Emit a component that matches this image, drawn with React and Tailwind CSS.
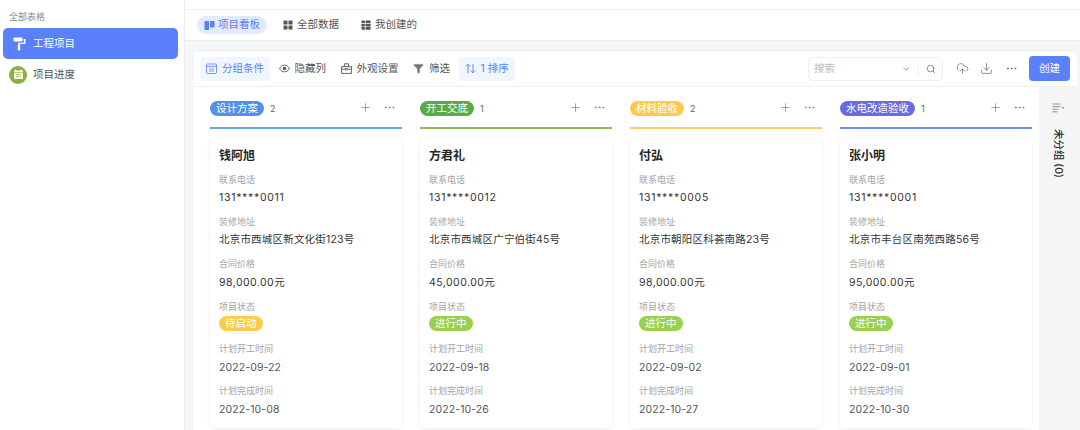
import React from 'react';
import { Plus, MoreHorizontal, Filter, ChevronDown, Search, CloudUpload, Download } from 'lucide-react';

const columns = [
  {
    name: '设计方案', pill: 'bg-[#5590e8]', line: 'bg-[#6ba3ee]', count: 2,
    person: '钱阿旭', phone: '131****0011', address: '北京市西城区新文化街123号', price: '98,000.00元',
    status: '待启动', statusColor: 'bg-[#fbcb4e]', start: '2022-09-22', end: '2022-10-08',
  },
  {
    name: '开工交底', pill: 'bg-[#58ad47]', line: 'bg-[#95b858]', count: 1,
    person: '方君礼', phone: '131****0012', address: '北京市西城区广宁伯街45号', price: '45,000.00元',
    status: '进行中', statusColor: 'bg-[#9ad04b]', start: '2022-09-18', end: '2022-10-26',
  },
  {
    name: '材料验收', pill: 'bg-[#fbcb4e]', line: 'bg-[#f2d06b]', count: 2,
    person: '付弘', phone: '131****0005', address: '北京市朝阳区科荟南路23号', price: '98,000.00元',
    status: '进行中', statusColor: 'bg-[#9ad04b]', start: '2022-09-02', end: '2022-10-27',
  },
  {
    name: '水电改造验收', pill: 'bg-[#6a6be0]', line: 'bg-[#6f8ff0]', count: 1,
    person: '张小明', phone: '131****0001', address: '北京市丰台区南苑西路56号', price: '95,000.00元',
    status: '进行中', statusColor: 'bg-[#9ad04b]', start: '2022-09-01', end: '2022-10-30',
  },
];

const Field = ({ label, children }) => (
  <div className="h-[42.4px]">
    <div className="text-[9px] leading-[14px] text-[#a3a3a3]">{label}</div>
    <div className="mt-[2.5px] text-[10.5px] leading-[18px] text-[#333]">{children}</div>
  </div>
);

const Card = ({ col }) => (
  <div className="h-[291px] rounded-[5px] bg-white px-[9px] pt-[10.5px] shadow-[0_1px_4px_rgba(0,0,0,0.08)]">
    <div className="h-[25px] text-[12px] font-bold leading-[15px] text-[#262626]">{col.person}</div>
    <Field label="联系电话"><span className="tracking-[0.7px]">{col.phone}</span></Field>
    <Field label="装修地址"><span className="tracking-[0.2px]">{col.address}</span></Field>
    <Field label="合同价格"><span className="tracking-[0.45px]">{col.price}</span></Field>
    <Field label="项目状态">
      <span className={`inline-block h-[15px] rounded-full px-[6px] align-top text-[10.5px] leading-[15px] text-white ${col.statusColor}`}>
        {col.status}
      </span>
    </Field>
    <Field label="计划开工时间"><span className="tracking-[0.1px] text-[#555]">{col.start}</span></Field>
    <Field label="计划完成时间"><span className="tracking-[0.1px] text-[#555]">{col.end}</span></Field>
  </div>
);

const Column = ({ col }) => (
  <div className="w-[192px] shrink-0">
    <div className="flex h-[39.5px] items-start pt-[14px]">
      <span className={`h-[15px] rounded-full px-[6px] text-[10.5px] leading-[15px] text-white ${col.pill}`}>{col.name}</span>
      <span className="ml-[6px] text-[9px] leading-[15px] text-[#666]">{col.count}</span>
      <div className="ml-auto flex items-center gap-[11px] pr-[6px] text-[#666]">
        <Plus size={13} strokeWidth={1.1} />
        <MoreHorizontal size={13} strokeWidth={1.1} />
      </div>
    </div>
    <div className={`h-[2px] ${col.line}`} />
    <div className="mt-[8.5px]">
      <Card col={col} />
    </div>
  </div>
);

const ToolItem = ({ icon, label, active }) => (
  <div className={`flex h-[24px] items-center gap-[5px] rounded-[4px] px-[6px] text-[10.5px] ${active ? 'bg-[#f1f5fe] text-[#5b7ff5]' : 'text-[#555]'}`}>
    {icon}
    <span>{label}</span>
  </div>
);

const RollerIcon = () => (
  <svg width="13" height="14" viewBox="0 0 13 14" fill="white">
    <rect x="0.5" y="0.5" width="9" height="4" rx="0.8" />
    <path d="M10.5 2h2v5H6.8v1.5H5.2V5.8h5.8z" />
    <rect x="4.8" y="8" width="2.4" height="5.6" rx="0.6" />
  </svg>
);

const CalendarBadge = () => (
  <div className="flex h-[18px] w-[18px] items-center justify-center rounded-full bg-[#8cb03f]">
    <svg width="11" height="11" viewBox="0 0 11 11">
      <rect x="1" y="1.5" width="9" height="8.5" rx="1" fill="white" />
      <rect x="2.2" y="0.6" width="1" height="1.6" fill="white" />
      <rect x="7.8" y="0.6" width="1" height="1.6" fill="white" />
      <path d="M1 3.6h9" stroke="#8cb03f" strokeWidth="0.7" />
      <path d="M3 5.6h5M3 7.8h5" stroke="#8cb03f" strokeWidth="0.8" />
    </svg>
  </div>
);

const KanbanIcon = () => (
  <svg width="11" height="11" viewBox="0 0 11 11" fill="#5b7ff5">
    <rect x="0.5" y="1" width="4.6" height="9" rx="0.8" />
    <rect x="6" y="1" width="4.6" height="6.5" rx="0.8" />
  </svg>
);

const GridIcon = () => (
  <svg width="10" height="10" viewBox="0 0 10 10" fill="#555">
    <rect x="0.5" y="0.5" width="4" height="4" rx="0.6" />
    <rect x="5.5" y="0.5" width="4" height="4" rx="0.6" />
    <rect x="0.5" y="5.5" width="4" height="4" rx="0.6" />
    <rect x="5.5" y="5.5" width="4" height="4" rx="0.6" />
  </svg>
);

const TableIcon = () => (
  <svg width="10" height="10" viewBox="0 0 10 10" fill="#555">
    <rect x="0.5" y="0.5" width="3.4" height="2.6" rx="0.4" />
    <rect x="4.6" y="0.5" width="5" height="2.6" rx="0.4" />
    <rect x="0.5" y="3.8" width="3.4" height="2.6" rx="0.4" />
    <rect x="4.6" y="3.8" width="5" height="2.6" rx="0.4" />
    <rect x="0.5" y="7.1" width="3.4" height="2.6" rx="0.4" />
    <rect x="4.6" y="7.1" width="5" height="2.6" rx="0.4" />
  </svg>
);

const GroupIcon = () => (
  <svg width="11" height="11" viewBox="0 0 11 11" fill="none" stroke="#5b7ff5" strokeWidth="0.8">
    <rect x="0.5" y="1" width="10" height="9.5" rx="1" />
    <path d="M0.5 3.4h10M3 6h5M3 8h5" />
  </svg>
);

const EyeIcon = () => (
  <svg width="11" height="11" viewBox="0 0 11 11" fill="none" stroke="#555" strokeWidth="0.9">
    <path d="M0.6 5.5C1.8 3.2 3.5 2.2 5.5 2.2s3.7 1 4.9 3.3c-1.2 2.3-2.9 3.3-4.9 3.3S1.8 7.8.6 5.5z" />
    <circle cx="5.5" cy="5.5" r="1.7" fill="#555" stroke="none" />
  </svg>
);

const AppearanceIcon = () => (
  <svg width="11" height="11" viewBox="0 0 11 11" fill="none" stroke="#555" strokeWidth="0.9">
    <path d="M0.6 3.6h9.8v6.8H0.6zM0.6 6.2h3.6M6.8 6.2h3.6M3.4 3.6V0.8h4.2v2.8" />
    <rect x="4.4" y="5.4" width="2.2" height="1.6" strokeWidth="0.7" />
  </svg>
);

const SortIcon = () => (
  <svg width="11" height="11" viewBox="0 0 11 11" fill="none" stroke="#5b7ff5" strokeWidth="0.9">
    <path d="M3 10V1.2M0.8 3.4L3 1.2 5.2 3.4" />
    <path d="M8 1v8.8M5.8 7.6L8 9.8l2.2-2.2" />
  </svg>
);

const RailIcon = () => (
  <svg width="12" height="10" viewBox="0 0 12 10" fill="none" stroke="#777" strokeWidth="0.8">
    <path d="M0.5 1h8M0.5 3.6h8M0.5 6.2h6M0.5 8.8h5" />
    <path d="M11.5 3.4v2.6L9.6 4.7z" fill="#777" stroke="none" />
  </svg>
);

export default function App() {
  return (
    <div className="flex h-[430px] w-[1080px] overflow-hidden bg-white font-['Inter','Noto_Sans_CJK_SC',sans-serif]">
      {/* sidebar */}
      <aside className="w-[185px] shrink-0 border-r border-[#eeeeee] bg-white">
        <div className="px-[9px] pt-[10px] text-[9px] leading-[13px] text-[#8a8a8a]">全部表格</div>
        <div className="mx-[3px] mt-[5px] flex h-[31px] w-[175px] items-center gap-[7px] rounded-[5px] bg-[#5b80fb] pl-[10px] text-[10.5px] text-white">
          <RollerIcon />
          <span>工程项目</span>
        </div>
        <div className="flex h-[31px] items-center gap-[6px] pl-[9px] text-[10.5px] text-[#555]">
          <CalendarBadge />
          <span>项目进度</span>
        </div>
      </aside>

      <main className="flex min-w-0 flex-1 flex-col bg-[#f5f6f8]">
        <div className="h-[10px] shrink-0 border-b border-[#eeeeee] bg-white" />
        <div className="flex h-[31px] shrink-0 items-center gap-[16px] border-b border-[#eeeeee] bg-white pl-[12px] text-[10.5px] text-[#555]">
          <div className="flex h-[18px] items-center gap-[3px] rounded-full bg-[#e2eafd] px-[7px] text-[#5b7ff5]">
            <KanbanIcon />
            <span>项目看板</span>
          </div>
          <div className="flex items-center gap-[4px]"><GridIcon /><span>全部数据</span></div>
          <div className="ml-[6px] flex items-center gap-[4px]"><TableIcon /><span>我创建的</span></div>
        </div>

        <div className="ml-[9px] mr-[3px] mt-[9px] flex min-h-0 flex-1 flex-col rounded-t-[5px] border-t border-[#ececec] bg-white">
          {/* toolbar */}
          <div className="flex h-[36px] shrink-0 items-center gap-[2.5px] border-b border-[#f0f0f0] pl-[6px] pr-[7px]">
            <ToolItem icon={<GroupIcon />} label="分组条件" active />
            <ToolItem icon={<EyeIcon />} label="隐藏列" />
            <ToolItem icon={<AppearanceIcon />} label="外观设置" />
            <ToolItem icon={<Filter size={11} strokeWidth={1.1} fill="#777" className="text-[#777]" />} label="筛选" />
            <ToolItem icon={<SortIcon />} label="1 排序" active />
            <div className="ml-auto flex h-[24px] w-[135px] items-center rounded-[5px] border border-[#eeeeee] pl-[5px] pr-[6px] text-[10.5px] text-[#bbbbbb]">
              <span className="flex-1">搜索</span>
              <ChevronDown size={10} className="mr-[7px] text-[#888]" />
              <div className="mr-[7px] h-[12px] w-px bg-[#f0f0f0]" />
              <Search size={10} className="text-[#777]" />
            </div>
            <div className="ml-[10px] flex items-center gap-[11.5px] text-[#555]">
              <CloudUpload size={13} strokeWidth={1.2} />
              <Download size={13} strokeWidth={1.2} />
              <MoreHorizontal size={13} strokeWidth={1.2} />
            </div>
            <div className="ml-[9px] flex h-[25px] w-[41px] items-center justify-center rounded-[4px] bg-[#5b80fb] text-[10.5px] text-white">创建</div>
          </div>

          {/* board */}
          <div className="flex min-h-0 flex-1">
            <div className="flex flex-1 gap-[18px] overflow-hidden pl-[16px]">
              {columns.map((col) => <Column key={col.name} col={col} />)}
            </div>
            <div className="flex w-[38px] shrink-0 flex-col items-center bg-[#f5f5f5] pt-[16px]">
              <RailIcon />
              <div className="mt-[16px] text-[10.5px] font-medium leading-[12px] text-[#333] [text-orientation:sideways] [writing-mode:vertical-rl]">未分组 (0)</div>
            </div>
          </div>
        </div>
      </main>
    </div>
  );
}
